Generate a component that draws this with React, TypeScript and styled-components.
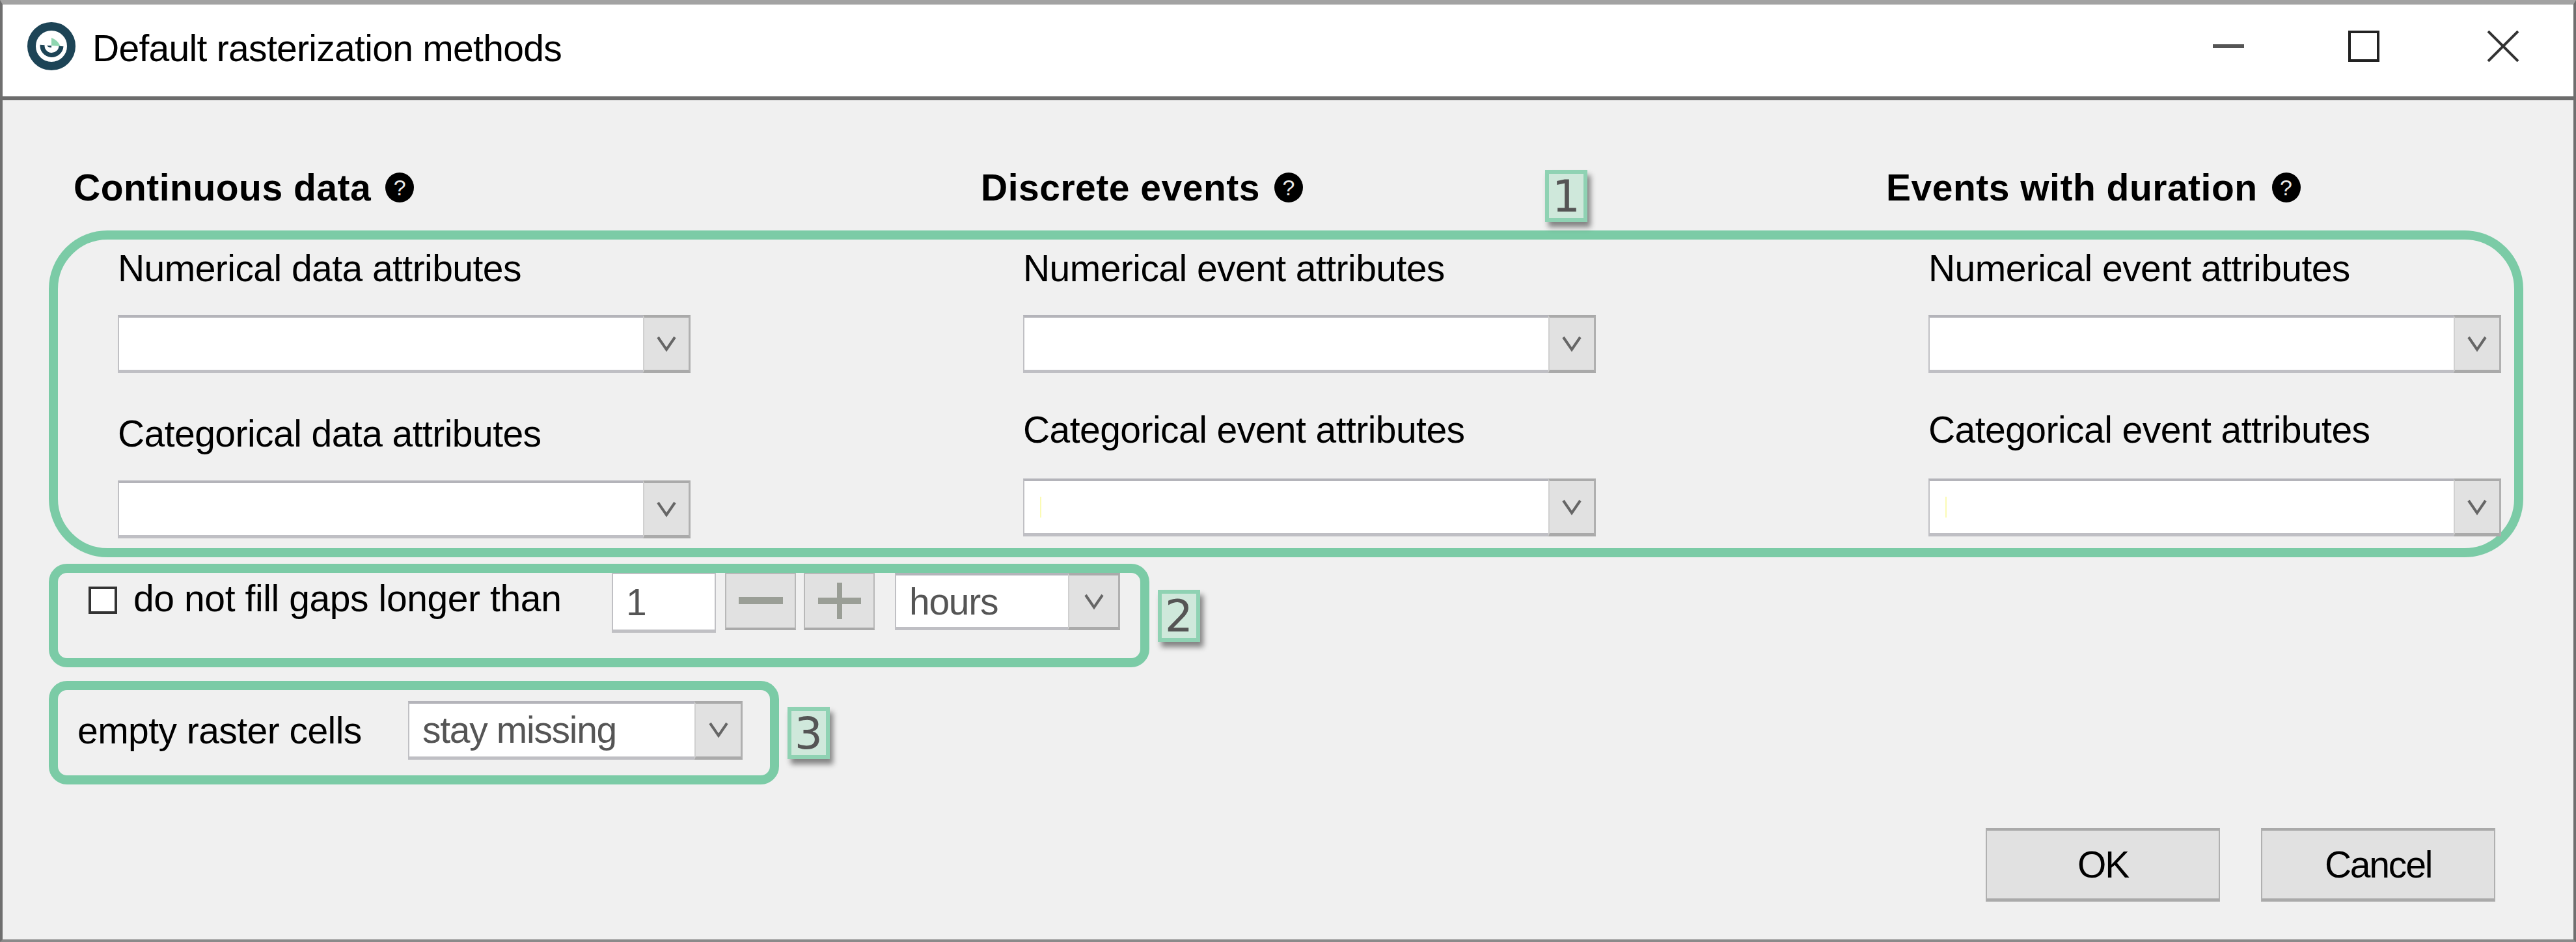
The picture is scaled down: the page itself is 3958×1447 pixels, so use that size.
import React from "react";
import styled, { createGlobalStyle } from "styled-components";

const FONT = `"Liberation Sans", Arial, sans-serif`;

const Global_style = createGlobalStyle`
  html, body {
    margin: 0;
    padding: 0;
    background: #f0f0f0;
  }
  * {
    box-sizing: border-box;
  }
`;

const Window = styled.div`
  width: 3958px;
  height: 1447px;
  display: flex;
  flex-direction: column;
  background: #f0f0f0;
  border-top: 7px solid #a3a3a3;
  border-left: 4px solid #6f6f6f;
  border-right: 4px solid #6f6f6f;
  border-bottom: 4px solid #8a8a8a;
  font-family: ${FONT};
  overflow: hidden;
`;
const Title_bar = styled.div`
  height: 147px;
  flex: none;
  display: flex;
  align-items: center;
  background: #fff;
  border-bottom: 6px solid #6c6c6c;
  padding-left: 37px;
  padding-bottom: 14px;
`;
const Title_text = styled.div`
  margin-left: 25px;
  margin-top: 6px;
  font-size: 57px;
  letter-spacing: -0.7px;
  color: #000;
  line-height: 60px;
`;
const Window_controls = styled.div`
  margin-left: auto;
  margin-right: 83px;
  display: flex;
  align-items: center;
  gap: 160px;
`;
const Close_wrap = styled.span`
  display: flex;
  margin-left: 5px;
`;
const Body = styled.div`
  flex: 1;
  display: flex;
  flex-direction: column;
  padding: 104px 77px 0 71px;
`;
const Heading_row = styled.div`
  display: grid;
  grid-template-columns: 1394px 1391px 1fr;
  padding-left: 38px;
  margin-bottom: 36px;
`;
const Heading = styled.div`
  display: flex;
  align-items: center;
  gap: 22px;
  font-size: 57px;
  font-weight: bold;
  line-height: 60px;
  letter-spacing: 0.5px;
  color: #000;
`;
const Help_mark = styled.span`
  width: 44px;
  height: 46px;
  border-radius: 50%;
  background: #000;
  color: #e8e8e8;
  display: flex;
  align-items: center;
  justify-content: center;
  font-size: 34px;
  font-weight: normal;
  letter-spacing: 0;
`;
const Annotated_box = styled.div<{ $height: number; $radius: number; $width?: number; $mt?: number }>`
  position: relative;
  flex: none;
  height: ${(p) => p.$height}px;
  width: ${(p) => (p.$width ? `${p.$width}px` : "auto")};
  margin-top: ${(p) => p.$mt || 0}px;
  border: 14px solid #7bcba6;
  border-radius: ${(p) => p.$radius}px;
`;
const Attribute_grid = styled.div`
  display: grid;
  grid-template-columns: 1391px 1391px 1fr;
  padding-left: 92px;
`;
const Attribute_column = styled.div`
  display: flex;
  flex-direction: column;
  align-items: flex-start;
`;
const Label = styled.div<{ $mt: number; $mb: number }>`
  font-size: 57px;
  line-height: 60px;
  letter-spacing: -0.55px;
  color: #000;
  margin-top: ${(p) => p.$mt}px;
  margin-bottom: ${(p) => p.$mb}px;
  white-space: nowrap;
`;
const Combo = styled.div<{ $width: number; $height: number }>`
  flex: none;
  display: flex;
  width: ${(p) => p.$width}px;
  height: ${(p) => p.$height}px;
  background: #fff;
  border-top: 4px solid #b4b4ba;
  border-left: 2px solid #c0c0c4;
  border-bottom: 5px solid #bfbfc4;
`;
const Combo_value = styled.div`
  flex: 1;
  display: flex;
  align-items: center;
  padding-left: 20px;
  font-size: 57px;
  letter-spacing: -1.3px;
  color: #555;
  white-space: nowrap;
`;
const Caret_mark = styled.span`
  width: 2px;
  height: 32px;
  margin-left: 4px;
  background: #fbfbb4;
`;
const Combo_button = styled.div<{ $width: number }>`
  flex: none;
  width: ${(p) => p.$width}px;
  display: flex;
  align-items: center;
  justify-content: center;
  background: #e1e1e1;
  border-left: 2px solid #d0d0d0;
  border-right: 3px solid #b0b0b0;
  border-top: 4px solid #aaa;
  border-bottom: 5px solid #aaa;
  margin: -4px 0 -5px;
`;
const Gap_row = styled.div`
  display: flex;
  align-items: flex-start;
  padding-left: 47px;
`;
const Check_box = styled.span`
  width: 44px;
  height: 42px;
  margin-top: 21px;
  flex: none;
  background: #fff;
  border: 4px solid #333;
`;
const Gap_label = styled.div`
  margin-left: 25px;
  width: 735px;
  margin-top: 9px;
  font-size: 57px;
  line-height: 60px;
  letter-spacing: -0.4px;
  color: #000;
  white-space: nowrap;
`;
const Number_input = styled.div`
  flex: none;
  width: 160px;
  height: 92px;
  display: flex;
  align-items: center;
  padding-left: 20px;
  background: #fff;
  border: 2px solid #c0c0c4;
  border-bottom-width: 5px;
  font-size: 57px;
  color: #555;
`;
const Step_button = styled.div<{ $ml: number }>`
  flex: none;
  width: 109px;
  height: 88px;
  margin-left: ${(p) => p.$ml}px;
  display: flex;
  align-items: center;
  justify-content: center;
  background: #e1e1e1;
  border: 2px solid #b8b8b8;
  border-bottom: 4px solid #aaa;
`;
const Hours_wrap = styled.div`
  margin-left: 31px;
`;
const Missing_row = styled.div`
  height: 100%;
  display: flex;
  align-items: center;
  padding-left: 30px;
  padding-bottom: 8px;
`;
const Missing_label = styled.div`
  width: 508px;
  font-size: 57px;
  line-height: 60px;
  letter-spacing: -0.55px;
  color: #000;
  white-space: nowrap;
`;
const Badge = styled.div<{ $top: number; $right: number }>`
  position: absolute;
  top: ${(p) => p.$top}px;
  right: ${(p) => p.$right}px;
  width: 65px;
  height: 80px;
  display: flex;
  align-items: center;
  justify-content: center;
  background: #cfe8db;
  border: 6px solid #8fd2b3;
  box-shadow: 5px 8px 8px rgba(0, 0, 0, 0.45);
  font-family: "DejaVu Sans", sans-serif;
  font-size: 68px;
  color: #555;
`;
const Footer = styled.div`
  display: flex;
  justify-content: flex-end;
  gap: 63px;
  margin-top: 67px;
  margin-right: 43px;
`;
const Dialog_button = styled.div`
  width: 360px;
  height: 113px;
  display: flex;
  align-items: center;
  justify-content: center;
  background: #e1e1e1;
  border: 2px solid #b0b0b0;
  border-top: 4px solid #aaa;
  border-bottom: 5px solid #aaa;
  font-size: 57px;
  letter-spacing: -2.2px;
  color: #000;
`;

const App_icon = () => (
  <svg width="76" height="76" viewBox="0 0 76 76">
    <circle cx="38" cy="38" r="30.5" fill="#fff" stroke="#1d4456" strokeWidth="13" />
    <path d="M24 36 A14.5 14.5 0 0 0 53 38" fill="none" stroke="#1d4456" strokeWidth="7" />
    <path d="M38 37 L38 25 Q47 28 52 38 Z" fill="#8fd6b0" />
    <path d="M31 37 L38 37 L38 40 Q33 40 31 37 Z" fill="#1d4456" />
  </svg>
);
const Minimize_icon = () => (
  <svg width="48" height="48" viewBox="0 0 48 48">
    <rect x="0" y="21" width="48" height="6" fill="#555" />
  </svg>
);
const Maximize_icon = () => (
  <svg width="48" height="48" viewBox="0 0 48 48">
    <rect x="2" y="2" width="44" height="44" fill="none" stroke="#222" strokeWidth="4" />
  </svg>
);
const Close_icon = () => (
  <svg width="50" height="48" viewBox="0 0 50 48">
    <path d="M2 1 L48 47 M48 1 L2 47" stroke="#333" strokeWidth="4" fill="none" />
  </svg>
);
const Chevron = () => (
  <svg width="32" height="26" viewBox="0 0 32 26">
    <path d="M3 3 L16 22 L29 3" stroke="#666" strokeWidth="4" fill="none" />
  </svg>
);
const Minus_icon = () => (
  <svg width="68" height="12" viewBox="0 0 68 12">
    <rect width="68" height="11" y="0" fill="#9a9e96" />
  </svg>
);
const Plus_icon = () => (
  <svg width="66" height="56" viewBox="0 0 66 56">
    <rect x="0" y="23" width="66" height="10" fill="#9a9e96" />
    <rect x="29" y="0" width="8" height="56" fill="#9a9e96" />
  </svg>
);

const Select_box: React.FC<{ width?: number; height?: number; button?: number; value?: string; caret?: boolean }> = ({
  width = 880,
  height = 89,
  button = 73,
  value,
  caret,
}) => (
  <Combo $width={width} $height={height}>
    <Combo_value>
      {caret && <Caret_mark />}
      {value}
    </Combo_value>
    <Combo_button $width={button}>
      <Chevron />
    </Combo_button>
  </Combo>
);

const columns = [
  { title: "Continuous data", first: "Numerical data attributes", second: "Categorical data attributes", label_top: 63, label_bottom: 42, caret: false },
  { title: "Discrete events", first: "Numerical event attributes", second: "Categorical event attributes", label_top: 57, label_bottom: 45, caret: true },
  { title: "Events with duration", first: "Numerical event attributes", second: "Categorical event attributes", label_top: 57, label_bottom: 45, caret: true },
];

export default function App() {
  return (
    <>
      <Global_style />
      <Window>
        <Title_bar>
          <App_icon />
          <Title_text>Default rasterization methods</Title_text>
          <Window_controls>
            <Minimize_icon />
            <Maximize_icon />
            <Close_wrap>
              <Close_icon />
            </Close_wrap>
          </Window_controls>
        </Title_bar>
        <Body>
          <Heading_row>
            {columns.map((col) => (
              <Heading key={col.title}>
                {col.title}
                <Help_mark>?</Help_mark>
              </Heading>
            ))}
          </Heading_row>
          <Annotated_box $height={502} $radius={90}>
            <Attribute_grid>
              {columns.map((col) => (
                <Attribute_column key={col.title}>
                  <Label $mt={14} $mb={42}>{col.first}</Label>
                  <Select_box />
                  <Label $mt={col.label_top} $mb={col.label_bottom}>{col.second}</Label>
                  <Select_box caret={col.caret} />
                </Attribute_column>
              ))}
            </Attribute_grid>
            <Badge $top={-107} $right={1424}>1</Badge>
          </Annotated_box>
          <Annotated_box $height={159} $radius={28} $width={1691} $mt={10}>
            <Gap_row>
              <Check_box />
              <Gap_label>do not fill gaps longer than</Gap_label>
              <Number_input>1</Number_input>
              <Step_button $ml={14}><Minus_icon /></Step_button>
              <Step_button $ml={12}><Plus_icon /></Step_button>
              <Hours_wrap>
                <Select_box width={346} height={88} button={80} value="hours" />
              </Hours_wrap>
            </Gap_row>
            <Badge $top={26} $right={-92}>2</Badge>
          </Annotated_box>
          <Annotated_box $height={159} $radius={28} $width={1122} $mt={21}>
            <Missing_row>
              <Missing_label>empty raster cells</Missing_label>
              <Select_box width={514} height={90} button={74} value="stay missing" />
            </Missing_row>
            <Badge $top={26} $right={-92}>3</Badge>
          </Annotated_box>
          <Footer>
            <Dialog_button>OK</Dialog_button>
            <Dialog_button>Cancel</Dialog_button>
          </Footer>
        </Body>
      </Window>
    </>
  );
}
